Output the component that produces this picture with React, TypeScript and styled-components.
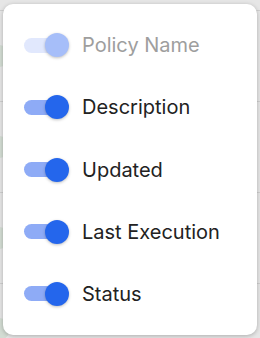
import styled, { createGlobalStyle } from 'styled-components';

const GlobalStyle = createGlobalStyle`
  html, body {
    margin: 0;
    padding: 0;
    background: #e6e6e6;
    font-family: Inter, 'Noto Sans', sans-serif;
  }
`;

const columns = [
  { label: 'Policy Name', on: true, disabled: true },
  { label: 'Description', on: true, disabled: false },
  { label: 'Updated', on: true, disabled: false },
  { label: 'Last Execution', on: true, disabled: false },
  { label: 'Status', on: true, disabled: false },
];

const App = () => {
  return (
    <Page>
      <GlobalStyle />
      <Backdrop>
        {[0, 1, 2, 3].map((i) => (
          <BackRow key={`back-${i}`}>
            <Avatar />
          </BackRow>
        ))}
      </Backdrop>
      <Menu>
        {columns.map((col) => (
          <Item key={col.label} disabled={col.disabled}>
            <Track on={col.on} disabled={col.disabled}>
              <Knob disabled={col.disabled} />
            </Track>
            <Label disabled={col.disabled}>{col.label}</Label>
          </Item>
        ))}
      </Menu>
    </Page>
  );
};

export default App;

const Page = styled.div`
  position: relative;
  width: 260px;
  height: 338px;
  overflow: hidden;
`;

const Backdrop = styled.div`
  display: flex;
  flex-direction: column;
  padding-top: 10px;
`;

const BackRow = styled.div`
  height: 90px;
  border-top: 1px solid #cfcfcf;
  display: flex;
  align-items: center;
`;

const Avatar = styled.div`
  width: 22px;
  height: 22px;
  border-radius: 50%;
  margin-left: -12px;
  background: #d3dcd3;
`;

const Menu = styled.div`
  position: absolute;
  top: 4px;
  left: 3px;
  width: 254px;
  height: 331px;
  box-sizing: border-box;
  background: #fff;
  border-radius: 10px;
  box-shadow: 0 1px 4px rgba(0, 0, 0, 0.25);
  padding: 10px 21px;
  display: flex;
  flex-direction: column;
`;

const Item = styled.div<{ disabled?: boolean }>`
  display: flex;
  align-items: center;
  gap: 18px;
  height: 63px;
  cursor: ${({ disabled }) => (disabled ? 'default' : 'pointer')};
`;

const Track = styled.div<{ on: boolean; disabled?: boolean }>`
  position: relative;
  width: 40px;
  height: 15px;
  border-radius: 8px;
  background: ${({ disabled }) => (disabled ? '#e1e8fd' : '#8eabf6')};
  flex-shrink: 0;
`;

const Knob = styled.div<{ disabled?: boolean }>`
  position: absolute;
  right: -5px;
  top: 50%;
  width: 24px;
  height: 24px;
  margin-top: -12px;
  border-radius: 50%;
  background: ${({ disabled }) => (disabled ? '#a6bef9' : '#2466ec')};
  box-shadow: 0 1px 3px rgba(0, 0, 0, 0.25);
`;

const Label = styled.span<{ disabled?: boolean }>`
  font-size: 20px;
  color: ${({ disabled }) => (disabled ? '#9e9e9e' : '#222')};
`;
